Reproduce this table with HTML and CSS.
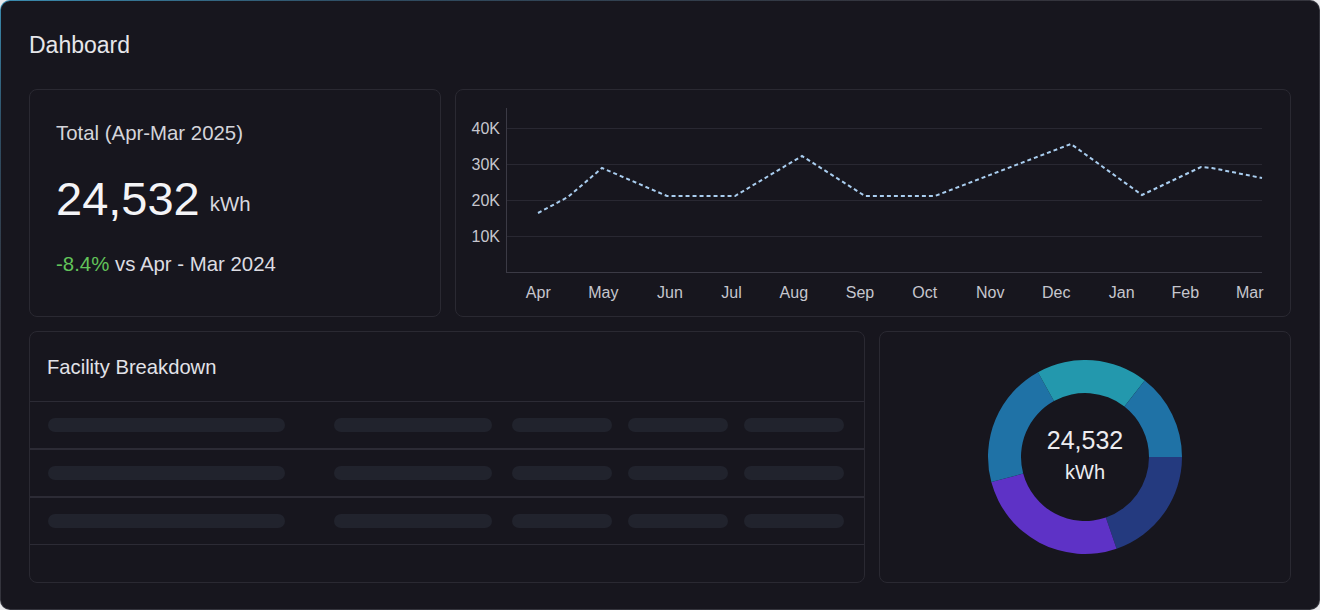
FILE: index.html
```html
<!DOCTYPE html>
<html lang="en">
<head>
<meta charset="utf-8">
<title>Dahboard</title>
<link rel="stylesheet" href="styles.css">
</head>
<body>
<div class="dash">
  <h1 class="title">Dahboard</h1>
  <div class="row-top">
    <section class="card total">
      <div class="total-label">Total (Apr-Mar 2025)</div>
      <div class="total-value"><span class="num">24,532</span><span class="unit">kWh</span></div>
      <div class="total-cmp"><span class="neg">-8.4%</span> vs Apr - Mar 2024</div>
    </section>
    <section class="card chart">
      <svg class="chart-svg" width="834" height="226" viewBox="456 90 834 226">
        <g class="grid">
          <line x1="507" y1="128.5" x2="1262" y2="128.5"/>
          <line x1="507" y1="164.5" x2="1262" y2="164.5"/>
          <line x1="507" y1="200.5" x2="1262" y2="200.5"/>
          <line x1="507" y1="236.5" x2="1262" y2="236.5"/>
        </g>
        <g class="axis">
          <line x1="506.5" y1="108" x2="506.5" y2="272"/>
          <line x1="506" y1="272.5" x2="1262" y2="272.5"/>
        </g>
        <g class="ylab">
          <text x="500" y="134">40K</text>
          <text x="500" y="170">30K</text>
          <text x="500" y="206">20K</text>
          <text x="500" y="242">10K</text>
        </g>
        <g class="xlab">
          <text x="538.3" y="298">Apr</text>
          <text x="603.3" y="298">May</text>
          <text x="670" y="298">Jun</text>
          <text x="731.5" y="298">Jul</text>
          <text x="793.8" y="298">Aug</text>
          <text x="860" y="298">Sep</text>
          <text x="924.8" y="298">Oct</text>
          <text x="990.3" y="298">Nov</text>
          <text x="1056.3" y="298">Dec</text>
          <text x="1121.7" y="298">Jan</text>
          <text x="1185.3" y="298">Feb</text>
          <text x="1249.7" y="298">Mar</text>
        </g>
        <polyline class="line" points="538,213 568,197 602,168 667,196 735,196 802,156 865,196 935,196 1071,144 1142,195 1201,167 1212,168 1262,178"/>
      </svg>
    </section>
  </div>
  <div class="row-bottom">
    <section class="card facility">
      <div class="fac-head">Facility Breakdown</div>
      <div class="fac-row r-thick">
        <div class="cell c1"><span class="sk w1"></span></div>
        <div class="cell c2"><span class="sk w2"></span></div>
        <div class="cell c3"><span class="sk w3"></span></div>
        <div class="cell c3"><span class="sk w3"></span></div>
        <div class="cell c5"><span class="sk w3"></span></div>
      </div>
      <div class="fac-row r-thick">
        <div class="cell c1"><span class="sk w1"></span></div>
        <div class="cell c2"><span class="sk w2"></span></div>
        <div class="cell c3"><span class="sk w3"></span></div>
        <div class="cell c3"><span class="sk w3"></span></div>
        <div class="cell c5"><span class="sk w3"></span></div>
      </div>
      <div class="fac-row r-thin">
        <div class="cell c1"><span class="sk w1"></span></div>
        <div class="cell c2"><span class="sk w2"></span></div>
        <div class="cell c3"><span class="sk w3"></span></div>
        <div class="cell c3"><span class="sk w3"></span></div>
        <div class="cell c5"><span class="sk w3"></span></div>
      </div>
    </section>
    <section class="card donut-card">
      <div class="donut">
        <svg class="donut-svg" width="194" height="194" viewBox="0 0 194 194">
          <path class="s-navy" d="M194 97 A97 97 0 0 1 128.58 188.71 L117.84 157.51 A64 64 0 0 0 161 97 Z"/>
          <path class="s-purple" d="M128.58 188.71 A97 97 0 0 1 3.31 122.10 L35.18 113.56 A64 64 0 0 0 117.84 157.51 Z"/>
          <path class="s-blue" d="M3.31 122.10 A97 97 0 0 1 49.97 12.16 L65.97 41.03 A64 64 0 0 0 35.18 113.56 Z"/>
          <path class="s-teal" d="M49.97 12.16 A97 97 0 0 1 156.72 20.56 L136.40 46.57 A64 64 0 0 0 65.97 41.03 Z"/>
          <path class="s-blue" d="M156.72 20.56 A97 97 0 0 1 194 97 L161 97 A64 64 0 0 0 136.40 46.57 Z"/>
        </svg>
        <div class="donut-text">
          <div class="d-num">24,532</div>
          <div class="d-unit">kWh</div>
        </div>
      </div>
    </section>
  </div>
</div>
</body>
</html>
```
FILE: styles.css
```css
html, body {
  margin: 0;
  padding: 0;
}
body {
  background: #e9e9ec;
  font-family: "Liberation Sans", Arial, sans-serif;
}
.dash {
  width: 1320px;
  height: 610px;
  box-sizing: border-box;
  border: 1px solid transparent;
  border-radius: 10px;
  background:
    linear-gradient(#17161e, #17161e) padding-box,
    linear-gradient(160deg, #3a8cb0 0%, #2f4d63 12%, #34343d 30%, #35353d 100%) border-box;
  padding: 29px 28px 0 28px;
}
.title {
  margin: 0;
  font-size: 23px;
  line-height: 30px;
  font-weight: 400;
  color: #e6e6ea;
}
.row-top {
  margin-top: 29px;
  display: grid;
  grid-template-columns: 412px 836px;
  column-gap: 14px;
  height: 228px;
}
.row-bottom {
  margin-top: 14px;
  display: grid;
  grid-template-columns: 836px 412px;
  column-gap: 14px;
  height: 252px;
}
.card {
  box-sizing: border-box;
  border: 1px solid #2a2932;
  border-radius: 8px;
  background: #17161e;
}

/* total */
.total {
  padding: 31px 26px 0 26px;
}
.total-label {
  font-size: 20.4px;
  line-height: 24px;
  color: #d4d4da;
}
.total-value {
  margin-top: 31px;
  height: 46px;
  white-space: nowrap;
}
.num {
  font-size: 47px;
  line-height: 46px;
  color: #f4f4f7;
}
.unit {
  margin-left: 10px;
  font-size: 20.4px;
  color: #d8d8de;
  vertical-align: 4px;
}
.total-cmp {
  margin-top: 30px;
  font-size: 20.4px;
  line-height: 24px;
  color: #dcdce2;
}
.neg {
  color: #62c35a;
}

/* chart */
.chart-svg {
  display: block;
}
.grid line {
  stroke: #292832;
  stroke-width: 1;
}
.axis line {
  stroke: #3b3a45;
  stroke-width: 1;
}
.ylab text {
  font-size: 16px;
  fill: #c6c6ce;
  text-anchor: end;
}
.xlab text {
  font-size: 16px;
  fill: #c6c6ce;
  text-anchor: middle;
}
.line {
  fill: none;
  stroke: #a9cdef;
  stroke-width: 2;
  stroke-dasharray: 4 3;
}

/* facility */
.facility {
  overflow: hidden;
}
.fac-head {
  height: 70px;
  box-sizing: border-box;
  display: flex;
  align-items: center;
  padding-left: 17px;
  padding-top: 2px;
  font-size: 20.2px;
  color: #e2e2e8;
  border-bottom: 1px solid #2c2b35;
}
.fac-row {
  display: grid;
  grid-template-columns: 286px 178px 116px 116px 100px;
  align-items: center;
  padding-left: 18px;
  box-sizing: border-box;
}
.r-thick {
  height: 48px;
  border-bottom: 2px solid #2c2b35;
}
.r-thin {
  height: 47px;
  border-bottom: 1px solid #2c2b35;
}
.cell {
  display: flex;
}
.sk {
  display: block;
  height: 14px;
  border-radius: 7px;
  background: #21232d;
}
.w1 { width: 237px; }
.w2 { width: 158px; }
.w3 { width: 100px; }

/* donut */
.donut-card {
  display: flex;
  align-items: center;
  justify-content: center;
}
.donut {
  display: grid;
  width: 194px;
  height: 194px;
}
.donut-svg,
.donut-text {
  grid-area: 1 / 1;
}
.donut-svg {
  display: block;
}
.donut-text {
  display: flex;
  flex-direction: column;
  align-items: center;
  justify-content: center;
  padding-bottom: 3px;
  color: #ececf0;
}
.d-num {
  font-size: 25px;
  line-height: 32px;
}
.d-unit {
  font-size: 20px;
  line-height: 32px;
}
.s-navy { fill: #243a7f; }
.s-purple { fill: #5e32c6; }
.s-blue { fill: #1f72a6; }
.s-teal { fill: #2398ad; }
```
